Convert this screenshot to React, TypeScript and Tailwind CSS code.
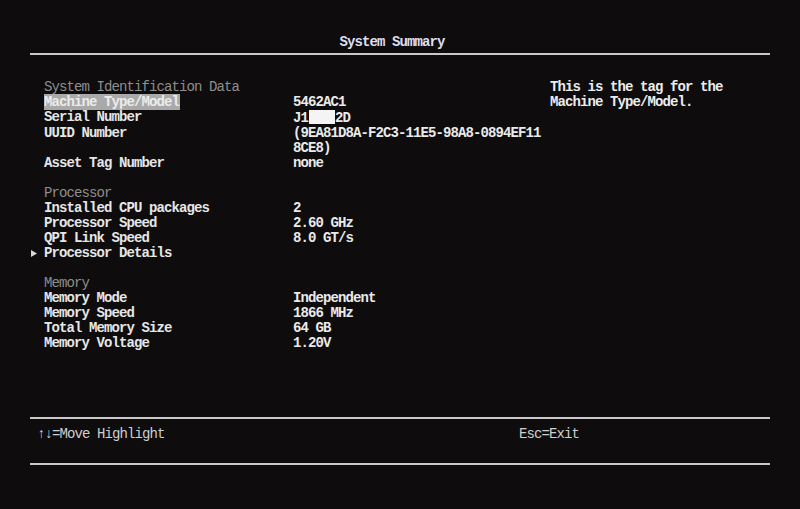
type Row = {
  label: string
  value?: React.ReactNode
  kind?: 'head' | 'item' | 'link' | 'blank'
  selected?: boolean
}

const ROWS: Row[] = [
  { label: 'System Identification Data', kind: 'head' },
  { label: 'Machine Type/Model', value: '5462AC1', selected: true },
  {
    label: 'Serial Number',
    value: (
      <>
        J1<span className="inline-block ml-[1px] w-[26px] h-[14px] bg-[#f4f4f4] align-[-2px]" />2D
      </>
    ),
  },
  {
    label: 'UUID Number',
    value: (
      <>
        (9EA81D8A-F2C3-11E5-98A8-0894EF11
        <br />
        8CE8)
      </>
    ),
  },
  { label: 'Asset Tag Number', value: 'none' },
  { label: '', kind: 'blank' },
  { label: 'Processor', kind: 'head' },
  { label: 'Installed CPU packages', value: '2' },
  { label: 'Processor Speed', value: '2.60 GHz' },
  { label: 'QPI Link Speed', value: '8.0 GT/s' },
  { label: 'Processor Details', kind: 'link' },
  { label: '', kind: 'blank' },
  { label: 'Memory', kind: 'head' },
  { label: 'Memory Mode', value: 'Independent' },
  { label: 'Memory Speed', value: '1866 MHz' },
  { label: 'Total Memory Size', value: '64 GB' },
  { label: 'Memory Voltage', value: '1.20V' },
]

function SummaryRow({ row }: { row: Row }) {
  if (row.kind === 'blank') return <div className="h-[15px]" />
  return (
    <div className="flex">
      <div className="w-[14px] flex items-start pt-[4px] pl-[1px]">
        {row.kind === 'link' && (
          <svg width="6" height="7" viewBox="0 0 6 7">
            <path d="M0 0 L6 3.5 L0 7 Z" fill="#d8d8d8" />
          </svg>
        )}
      </div>
      <div className="w-[249px]">
        {row.kind === 'head' ? (
          <span className="text-[#8e8e8e] font-normal">{row.label}</span>
        ) : row.selected ? (
          <span className="bg-[#a9a9a9] text-[#ececec] pr-[1px]">{row.label}</span>
        ) : (
          <span className="text-[#e6e6e6]">{row.label}</span>
        )}
      </div>
      <div className="text-[#eaeaea]">{row.value}</div>
    </div>
  )
}

export default function App() {
  return (
    <div
      className="w-[800px] h-[509px] bg-[#0e0c0d] flex flex-col overflow-hidden text-[14px] leading-[15px] tracking-[-0.9px]"
      style={{ fontFamily: '"Liberation Mono", "DejaVu Sans Mono", monospace' }}
    >
      <div className="pt-[35px] text-center text-[#dedff0] font-bold pr-[16px]">System Summary</div>
      <div className="mt-[3px] mx-[30px] h-[2px] bg-[#c9c9c9]" />

      <div className="mt-[25px] flex pl-[30px] font-bold">
        <div className="w-[520px]">
          {ROWS.map((row, i) => (
            <SummaryRow key={i} row={row} />
          ))}
        </div>
        <div className="text-[#ececec]">
          This is the tag for the
          <br />
          Machine Type/Model.
        </div>
      </div>

      <div className="mt-auto mx-[30px]">
        <div className="h-[2px] bg-[#c9c9c9]" />
        <div className="h-[44px] pt-[8px] flex text-[#cfcfcf]">
          <span className="w-[489px] pl-[7px]">↑↓=Move Highlight</span>
          <span>Esc=Exit</span>
        </div>
        <div className="h-[2px] bg-[#c9c9c9] mb-[44px]" />
      </div>
    </div>
  )
}
